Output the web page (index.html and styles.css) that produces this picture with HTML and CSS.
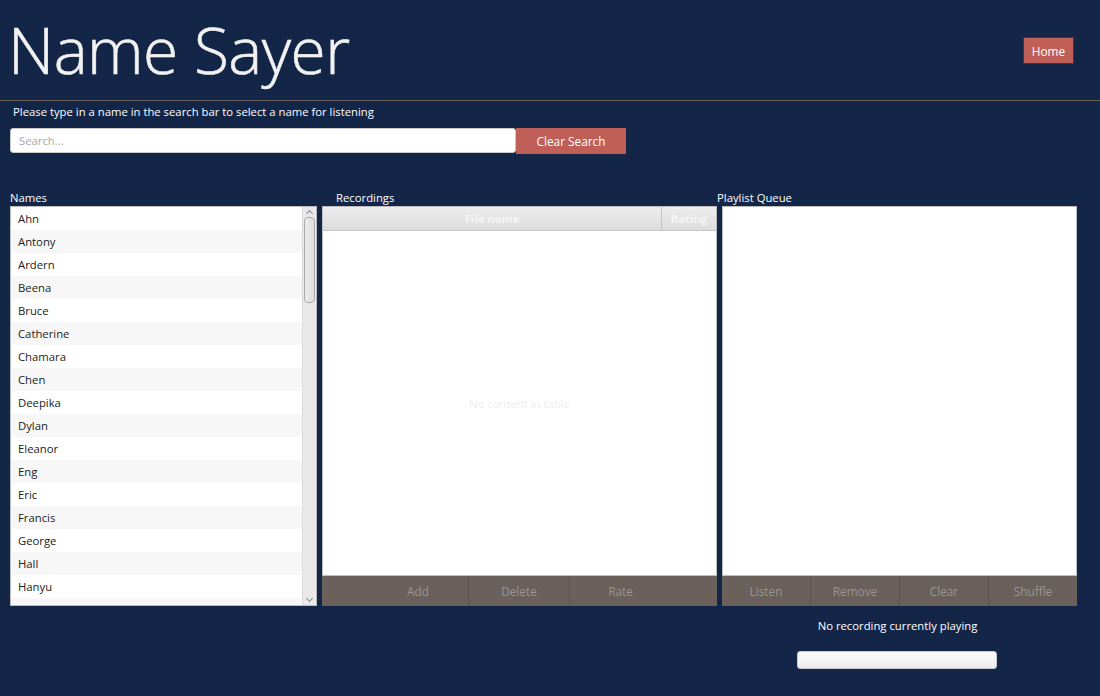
FILE: index.html
```html
<!DOCTYPE html>
<html>
<head>
<meta charset="utf-8">
<link rel="stylesheet" href="styles.css">
</head>
<body>
<header class="top">
  <h1 class="title">Name Sayer</h1>
  <button class="btn-red home">Home</button>
</header>
<p class="hint">Please type in a name in the search bar to select a name for listening</p>
<div class="search-row">
  <input class="search" type="text" placeholder="Search...">
  <button class="btn-red clear">Clear Search</button>
</div>
<div class="panels">
  <section class="col names-col">
    <div class="label">Names</div>
    <div class="list-box">
      <ul class="names">
        <li>Ahn</li><li>Antony</li><li>Ardern</li><li>Beena</li><li>Bruce</li><li>Catherine</li><li>Chamara</li><li>Chen</li><li>Deepika</li><li>Dylan</li><li>Eleanor</li><li>Eng</li><li>Eric</li><li>Francis</li><li>George</li><li>Hall</li><li>Hanyu</li><li>Hayden</li>
      </ul>
      <div class="scrollbar">
        <div class="arrow up"></div>
        <div class="track"><div class="thumb"></div></div>
        <div class="arrow down"></div>
      </div>
    </div>
  </section>
  <section class="col rec-col">
    <div class="label rec-label">Recordings</div>
    <div class="table-box">
      <div class="thead">
        <div class="th fname">File name</div>
        <div class="th rating">Rating</div>
      </div>
      <div class="tbody"><span class="empty">No content in table</span></div>
    </div>
    <div class="bar center">
      <button class="bb rb">Add</button>
      <button class="bb rb">Delete</button>
      <button class="bb rb last">Rate</button>
    </div>
  </section>
  <section class="col play-col">
    <div class="label play-label">Playlist Queue</div>
    <div class="queue-box"></div>
    <div class="bar">
      <button class="bb q">Listen</button>
      <button class="bb q">Remove</button>
      <button class="bb q">Clear</button>
      <button class="bb q last">Shuffle</button>
    </div>
    <div class="status">No recording currently playing</div>
    <div class="progress"></div>
  </section>
</div>
</body>
</html>
```

FILE: styles.css
```css
* { box-sizing: border-box; }
html, body { margin: 0; padding: 0; }
body {
  width: 1100px;
  height: 696px;
  overflow: hidden;
  background: #142648;
  font-family: "Open Sans", "Noto Sans", sans-serif;
  color: #ffffff;
  font-size: 11.3px;
}
.top {
  height: 101px;
  border-bottom: 1px solid #6b5f5b;
  display: flex;
  justify-content: space-between;
  align-items: flex-start;
}
.title {
  margin: 8px 0 0 8px;
  font-weight: 300;
  font-size: 64px;
  line-height: 84px;
  color: #f2f2f2;
  letter-spacing: -0.5px;
  -webkit-text-stroke: 0.6px #f2f2f2;
}
.btn-red {
  background: #bf5f58;
  color: #ffffff;
  border: none;
  font-family: inherit;
  font-size: 11.8px;
  padding: 0;
}
.home {
  margin: 37px 26px 0 0;
  width: 51px;
  height: 27px;
  border: 1px solid #4f2e42;
}
.hint {
  margin: 3px 0 0 13px;
  line-height: 16px;
}
.search-row {
  display: flex;
  margin: 8px 0 0 10px;
  height: 26px;
}
.search {
  width: 506px;
  height: 25px;
  border: 1px solid #c9c9c9;
  border-radius: 3px;
  padding: 0 8px;
  font-family: inherit;
  font-size: 11.3px;
  outline: none;
}
.search::placeholder { color: #a8a8a8; }
.clear { width: 110px; height: 26px; }
.panels {
  display: flex;
  margin: 36px 0 0 10px;
  gap: 5px;
}
.col { display: flex; flex-direction: column; }
.label { height: 16px; line-height: 16px; margin-bottom: 0; }
.names-col { width: 307px; }
.list-box {
  height: 400px;
  border: 1px solid #bdbdbd;
  background: #fff;
  display: flex;
  overflow: hidden;
}
.names {
  list-style: none;
  margin: 0;
  padding: 0;
  flex: 1;
  height: 398px;
  overflow: hidden;
}
.names li {
  height: 23px;
  line-height: 23px;
  padding-left: 7px;
  color: #222;
}
.names li:nth-child(even) { background: #f7f7f7; }
.scrollbar {
  width: 14px;
  background: #e9e9e9;
  display: flex;
  flex-direction: column;
  border-left: 1px solid #dcdcdc;
}
.arrow { height: 10px; position: relative; }
.arrow::after {
  content: "";
  position: absolute;
  left: 4px;
  width: 4px;
  height: 4px;
  border-left: 1px solid #8a8a8a;
  border-top: 1px solid #8a8a8a;
}
.arrow.up::after { top: 4px; transform: rotate(45deg); }
.arrow.down::after { top: 1px; transform: rotate(225deg); }
.track { flex: 1; padding: 0 1px; }
.thumb {
  height: 86px;
  border: 1px solid #a9a9a9;
  border-radius: 4px;
  background: linear-gradient(to right, #ececec, #dedede);
}
.rec-col { width: 395px; }
.rec-label { padding-left: 14px; }
.table-box {
  height: 370px;
  border: 1px solid #bdbdbd;
  background: #fff;
  display: flex;
  flex-direction: column;
}
.thead {
  display: flex;
  height: 24px;
  background: linear-gradient(#ededed, #dcdcdc);
  border-bottom: 1px solid #c6c6c6;
}
.th {
  color: #f4f4f4;
  font-weight: 700;
  line-height: 23px;
  text-align: center;
}
.fname { flex: 1; border-right: 1px solid #c6c6c6; }
.rating { width: 54px; overflow: hidden; white-space: nowrap; }
.tbody {
  flex: 1;
  display: flex;
  align-items: center;
  justify-content: center;
}
.empty { color: #eeeeee; }
.bar {
  height: 30px;
  background: #6a605c;
  display: flex;
}
.bar.center { justify-content: center; }
.bb {
  background: transparent;
  border: none;
  border-right: 1px solid #5c524f;
  color: #9b9593;
  font-family: inherit;
  font-size: 11.8px;
  padding: 0;
  height: 30px;
}
.rb { width: 101px; }
.bb.last { border-right: none; }
.play-col { width: 355px; margin-left: 0; }
.play-label { margin-left: -5px; }
.queue-box {
  height: 370px;
  border: 1px solid #bdbdbd;
  background: #fff;
}
.q { width: 89px; }
.q.last { width: 88px; }
.status {
  text-align: center;
  margin: 12px 4px 0 0;
  line-height: 16px;
}
.progress {
  margin: 17px 0 0 75px;
  width: 200px;
  height: 18px;
  border: 1px solid #c9c9c9;
  border-radius: 3px;
  background: linear-gradient(#fdfdfd, #ebebeb);
}
```
